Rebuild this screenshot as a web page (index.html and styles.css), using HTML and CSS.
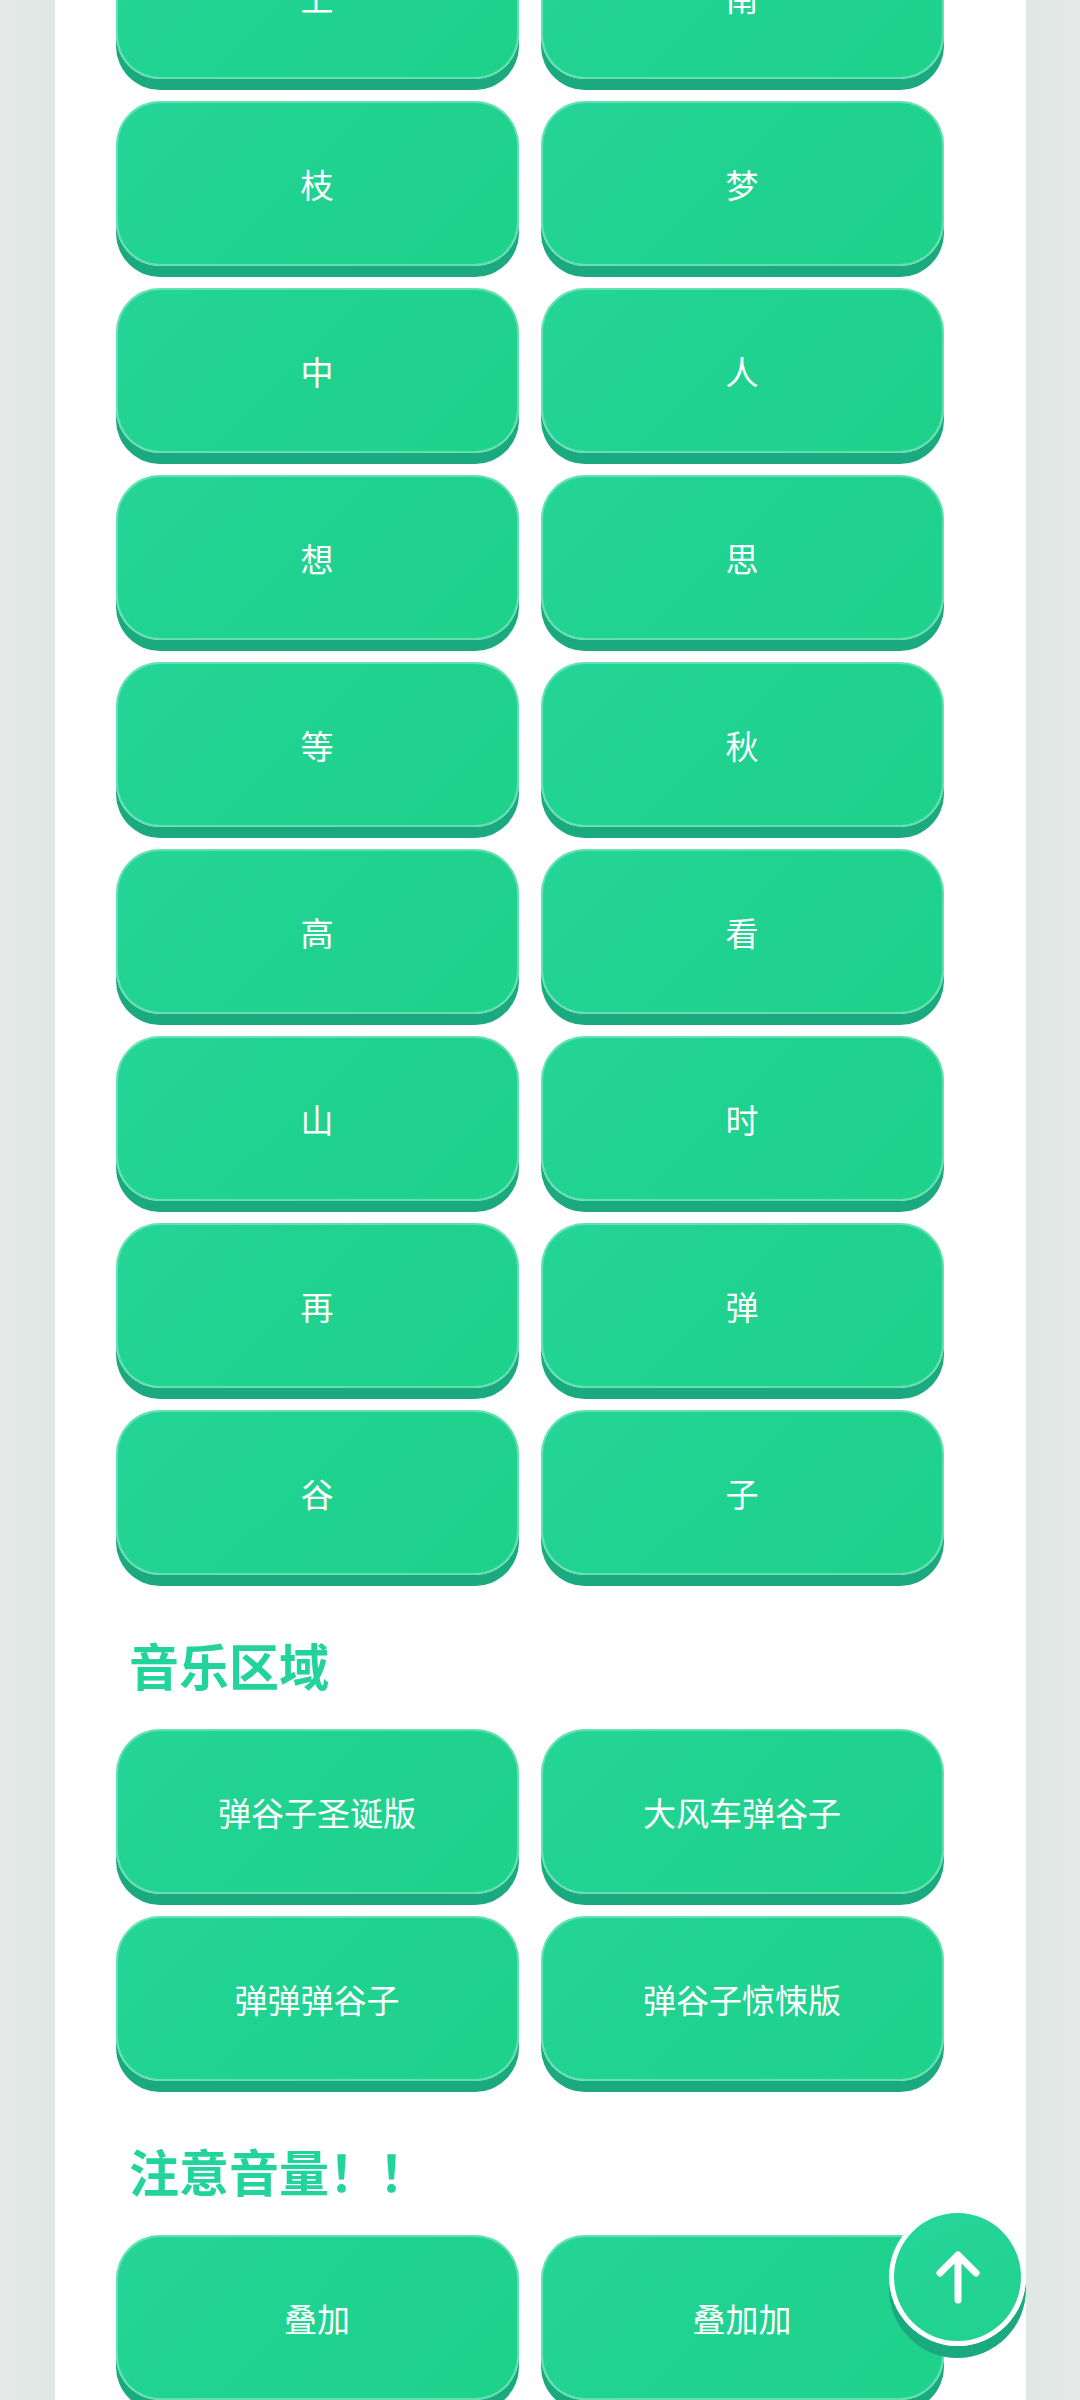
FILE: index.html
```html
<!DOCTYPE html>
<html lang="zh">
<head>
  <meta charset="utf-8">
  <title>弹谷子</title>
  <link rel="stylesheet" href="styles.css">
</head>
<body>
  <div class="card">
    <div class="grid first">
      <button class="btn">上</button>
      <button class="btn">南</button>
      <button class="btn">枝</button>
      <button class="btn">梦</button>
      <button class="btn">中</button>
      <button class="btn">人</button>
      <button class="btn">想</button>
      <button class="btn">思</button>
      <button class="btn">等</button>
      <button class="btn">秋</button>
      <button class="btn">高</button>
      <button class="btn">看</button>
      <button class="btn">山</button>
      <button class="btn">时</button>
      <button class="btn">再</button>
      <button class="btn">弹</button>
      <button class="btn">谷</button>
      <button class="btn">子</button>
    </div>

    <h2 class="title">音乐区域</h2>
    <div class="grid">
      <button class="btn">弹谷子圣诞版</button>
      <button class="btn">大风车弹谷子</button>
      <button class="btn">弹弹弹谷子</button>
      <button class="btn">弹谷子惊悚版</button>
    </div>

    <h2 class="title">注意音量！！</h2>
    <div class="grid">
      <button class="btn">叠加</button>
      <button class="btn">叠加加</button>
    </div>
  </div>

  <button class="to-top" aria-label="返回顶部">
    <svg width="44" height="54" viewBox="0 0 44 54">
      <path d="M22 50V5M4 23L22 5L40 23" fill="none" stroke="#fff" stroke-width="7" stroke-linecap="round" stroke-linejoin="round"/>
    </svg>
  </button>
</body>
</html>
```

FILE: styles.css
```css
html, body {
  margin: 0;
  height: 2400px;
  overflow: hidden;
}

body {
  font-family: "Noto Sans CJK SC", "Noto Sans", sans-serif;
  background: linear-gradient(90deg, #e6e9e8 0, #dfe7e4 55px, #dfe7e4 1025px, #e6e9e8 100%);
}

.card {
  display: flow-root;
  margin: 0 54px 0 55px;
  padding: 0 81px 0 61px;
  height: 2400px;
  background-color: #fff;
}

.grid {
  display: grid;
  grid-template-columns: repeat(2, 403px);
  column-gap: 22px;
  row-gap: 22px;
}

.first {
  margin-top: -86px;
}

.btn {
  height: 165px;
  padding: 1px 1px 0 0;
  border: none;
  border-radius: 44px;
  background: linear-gradient(135deg, #24d598 0, #20d28f 50%, #1fd28b 100%);
  box-shadow: 0 11px 0 #1ba97f, inset 0 0 0 2px rgba(255, 255, 255, 0.3);
  font-family: inherit;
  font-size: 33px;
  color: #fff;
}

.title {
  margin: 0;
  padding: 52px 0 28px 13px;
  font-size: 50px;
  line-height: 74px;
  font-weight: bold;
  color: #22d39a;
}

.to-top {
  position: fixed;
  left: 889px;
  top: 2208px;
  width: 137px;
  height: 138px;
  display: flex;
  align-items: center;
  justify-content: center;
  padding: 0;
  border: 5px solid #fff;
  border-radius: 50%;
  box-sizing: border-box;
  background: linear-gradient(160deg, #26d69b, #20d18e);
  box-shadow: 0 12px 0 #1ba97f;
}
```
